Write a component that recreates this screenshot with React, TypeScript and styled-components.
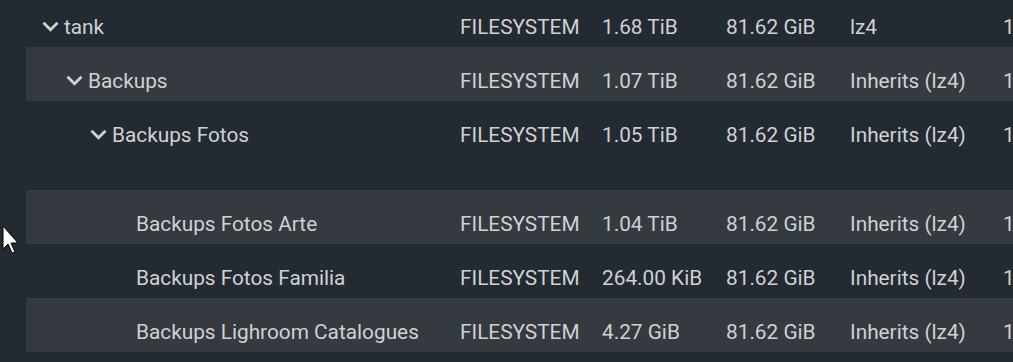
import React from "react";
import styled, { createGlobalStyle } from "styled-components";

const Global = createGlobalStyle`
  html, body { margin: 0; padding: 0; background: #232a32; overflow: hidden; }
  body { font-family: Roboto, "Noto Sans", Arial, sans-serif; }
`;

const Page = styled.div`
  position: relative;
  width: 1013px;
  height: 362px;
  overflow: hidden;
  background: #232a32;
`;

const Table = styled.div`
  margin-top: -7px;
  margin-left: 26px;
  display: flex;
  flex-direction: column;
`;

const Row = styled.div<{ $striped: boolean }>`
  display: grid;
  grid-template-columns: 434px 142px 124px 124px 153px 1fr;
  align-items: center;
  height: 54px;
  box-sizing: border-box;
  padding-top: 13px;
  background: ${(p) => (p.$striped ? "#343a40" : "#232a32")};
  color: #d0d1d2;
  font-size: 20.8px;
  white-space: nowrap;
`;

const Spacer = styled.div`
  height: 35px;
  background: #232a32;
`;

const NameCell = styled.div<{ $depth: number }>`
  display: flex;
  align-items: center;
  padding-left: ${(p) => 16 + p.$depth * 24}px;
`;

const Toggle = styled.span`
  display: inline-flex;
  width: 22px;
  height: 20px;
  align-items: center;
  justify-content: flex-start;
`;

const Cell = styled.div`
  overflow: hidden;
`;

const Cursor = styled.svg`
  position: absolute;
  left: 2px;
  top: 225px;
`;

const Chevron = () => (
  <svg width="17" height="11" viewBox="0 0 17 11">
    <polyline points="1.5,1.8 8.5,8.8 15.5,1.8" fill="none" stroke="#d0d1d2" strokeWidth="2.8" />
  </svg>
);

type Item = {
  name: string;
  depth: number;
  open?: boolean;
  used: string;
  comp: string;
  extra?: boolean;
};

const items: Item[] = [
  { name: "tank", depth: 0, open: true, used: "1.68 TiB", comp: "lz4" },
  { name: "Backups", depth: 1, open: true, used: "1.07 TiB", comp: "Inherits (lz4)" },
  { name: "Backups Fotos", depth: 2, open: true, used: "1.05 TiB", comp: "Inherits (lz4)", extra: true },
  { name: "Backups Fotos Arte", depth: 3, used: "1.04 TiB", comp: "Inherits (lz4)" },
  { name: "Backups Fotos Familia", depth: 3, used: "264.00 KiB", comp: "Inherits (lz4)" },
  { name: "Backups Lighroom Catalogues", depth: 3, used: "4.27 GiB", comp: "Inherits (lz4)" },
];

export default function App() {
  return (
    <Page>
      <Global />
      <Table>
        {items.map((it, i) => (
          <React.Fragment key={it.name}>
            <Row $striped={i % 2 === 1}>
              <NameCell $depth={it.depth}>
                <Toggle>{it.open ? <Chevron /> : null}</Toggle>
                <span>{it.name}</span>
              </NameCell>
              <Cell>FILESYSTEM</Cell>
              <Cell>{it.used}</Cell>
              <Cell>81.62 GiB</Cell>
              <Cell>{it.comp}</Cell>
              <Cell>1</Cell>
            </Row>
            {it.extra ? <Spacer /> : null}
          </React.Fragment>
        ))}
        <Spacer />
      </Table>
      <Cursor width="20" height="30" viewBox="0 0 20 30">
        <path d="M1 1 L1 24 L6 19 L10 28 L13 27 L9 18 L16 18 Z" fill="#fff" stroke="#000" strokeWidth="1" />
      </Cursor>
    </Page>
  );
}
